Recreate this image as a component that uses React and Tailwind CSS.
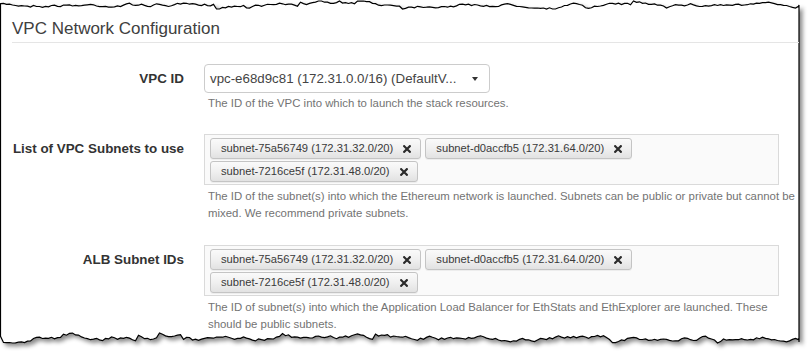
import React from 'react';

// deterministic jagged edge for the torn-paper frame
function tearPoints(x0, x1, base, amp, seed) {
  let s = seed;
  const rnd = () => {
    s = (s * 16807) % 2147483647;
    return s / 2147483647;
  };
  const pts = [];
  let y = base;
  for (let x = x0; x <= x1; x += 3) {
    y += (rnd() - 0.5) * amp * 0.9;
    y += (base - y) * 0.25;
    if (rnd() > 0.93) y += (rnd() - 0.5) * amp * 2.2;
    pts.push([x, Math.max(base - amp, Math.min(base + amp, y))]);
  }
  pts.push([x1, base]);
  return pts;
}

function TornFrame() {
  const top = tearPoints(0.5, 799, 5, 4, 7);
  const bottom = tearPoints(0.5, 799, 338, 5, 13).reverse();
  const d =
    'M ' + top.map(([x, y]) => `${x.toFixed(1)} ${y.toFixed(1)}`).join(' L ') +
    ' L 799 342 L ' + bottom.map(([x, y]) => `${x.toFixed(1)} ${y.toFixed(1)}`).join(' L ') +
    ' Z';
  return (
    <svg className="absolute inset-0 drop-shadow-[3px_3px_2px_rgba(0,0,0,0.45)]" width="810" height="357">
      <path d={d} fill="#fff" stroke="#000" strokeWidth="1.2" />
    </svg>
  );
}

function CloseX() {
  return (
    <svg width="8" height="8" viewBox="0 0 8 8" className="shrink-0">
      <path d="M1.2 1.2 L6.8 6.8 M6.8 1.2 L1.2 6.8" stroke="#2b2b2b" strokeWidth="2.2" strokeLinecap="square" />
    </svg>
  );
}

function Tag({ label }) {
  return (
    <div className="flex h-[21px] items-center gap-[10px] rounded-[3px] border border-[#c4c4c4] bg-gradient-to-b from-[#fafafa] via-[#f0f0f0] to-[#e2e2e2] pl-[10px] pr-[9px] text-[11.2px] text-[#3a3a3a] shadow-[0_1px_0_rgba(0,0,0,0.05)]">
      <span>{label}</span>
      <CloseX />
    </div>
  );
}

const subnets = [
  'subnet-75a56749 (172.31.32.0/20)',
  'subnet-d0accfb5 (172.31.64.0/20)',
  'subnet-7216ce5f (172.31.48.0/20)',
];

function SubnetPicker() {
  return (
    <div className="flex w-[575px] flex-wrap gap-x-[4px] gap-y-[2px] border border-[#dadada] bg-[#fafafa] pb-[2px] pl-[5px] pt-[3px]">
      {subnets.map((s) => (
        <Tag key={s} label={s} />
      ))}
    </div>
  );
}

function Help({ children, className = 'mt-[3px]' }) {
  return <p className={`${className} pl-[4px] text-[11.4px] leading-[17px] text-[#737373]`}>{children}</p>;
}

export default function App() {
  return (
    <div className="relative h-[357px] w-[810px] overflow-hidden bg-white font-['Liberation_Sans',Arial,sans-serif]">
      <TornFrame />
      <div className="relative w-[799px] pl-[12px]">
        <h3 className="border-b border-[#e5e5e5] pb-[3px] pt-[19px] text-[17px] leading-[20px] text-[#404040]">
          VPC Network Configuration
        </h3>

        <div className="mt-[21px] flex">
          <label className="w-[172px] text-right text-[13.4px] font-bold leading-[29px] text-[#333]">VPC ID</label>
          <div className="ml-[20px] flex-1">
            <div className="flex h-[29px] w-[286px] items-center justify-between rounded-[4px] border border-[#cccccc] bg-white pl-[5px] pr-[11px] text-[13.3px] text-[#444]">
              <span>vpc-e68d9c81 (172.31.0.0/16) (DefaultV...</span>
              <span className="h-0 w-0 border-x-[3.5px] border-t-[4px] border-x-transparent border-t-[#333]" />
            </div>
            <Help className="mt-[2px]">The ID of the VPC into which to launch the stack resources.</Help>
          </div>
        </div>

        <div className="mt-[22px] flex">
          <label className="w-[172px] pt-[4px] text-right text-[13.4px] font-bold leading-[21px] text-[#333]">List of VPC Subnets to use</label>
          <div className="ml-[20px] flex-1">
            <SubnetPicker />
            <Help>
              The ID of the subnet(s) into which the Ethereum network is launched. Subnets can be public or private but cannot be mixed. We recommend private subnets.
            </Help>
          </div>
        </div>

        <div className="mt-[23px] flex">
          <label className="w-[172px] pt-[4px] text-right text-[13.4px] font-bold leading-[21px] text-[#333]">ALB Subnet IDs</label>
          <div className="ml-[20px] flex-1">
            <SubnetPicker />
            <Help>
              The ID of subnet(s) into which the Application Load Balancer for EthStats and EthExplorer are launched. These should be public subnets.
            </Help>
          </div>
        </div>
      </div>
    </div>
  );
}
